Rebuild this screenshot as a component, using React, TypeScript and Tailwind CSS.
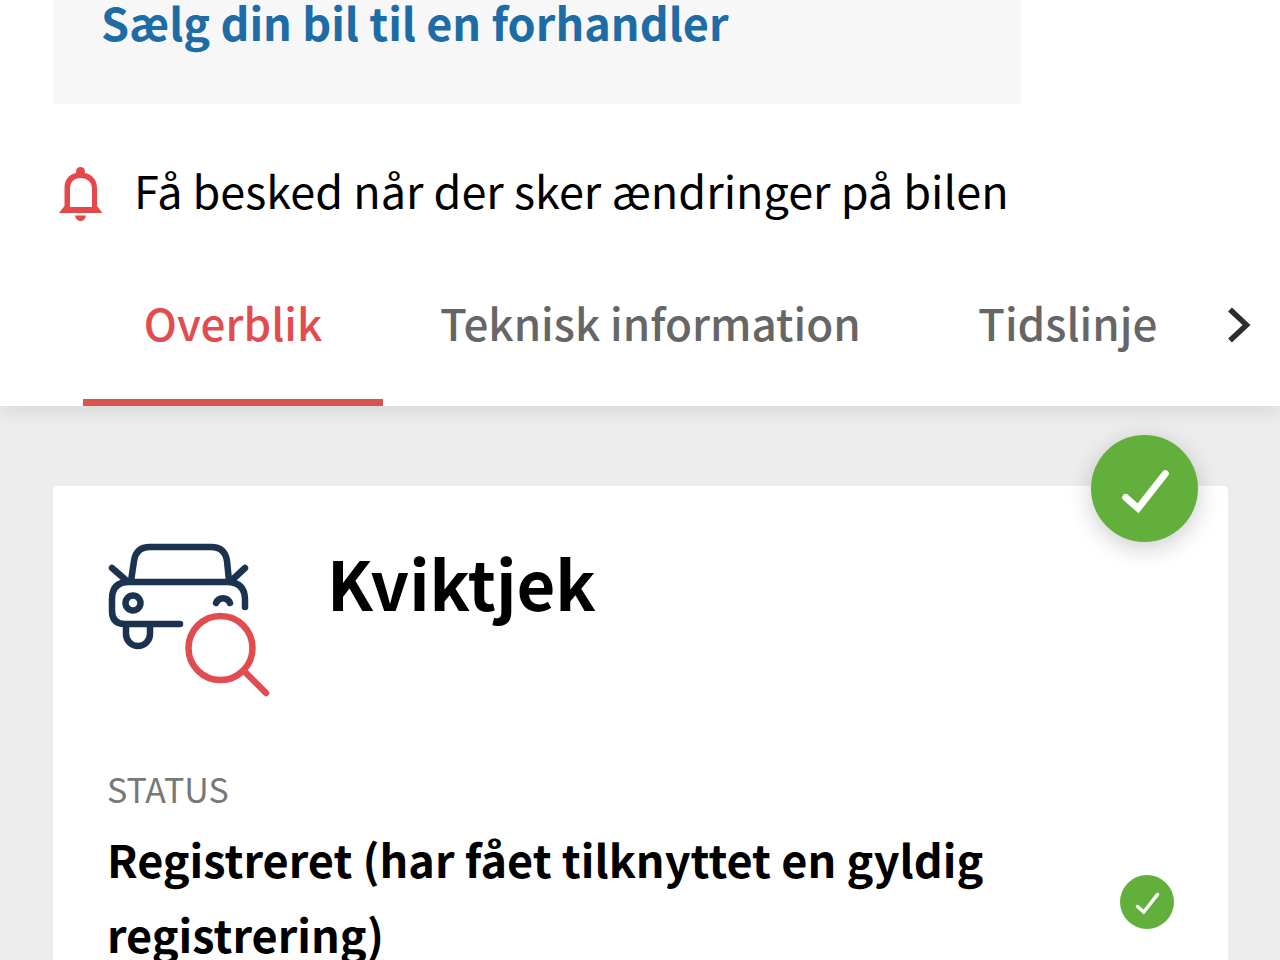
import { useState } from 'react';

const TABS = [
    { id: 'overview', label: 'Overblik' },
    { id: 'technical', label: 'Teknisk information' },
    { id: 'timeline', label: 'Tidslinje' },
];

const BellIcon = () => (
    <svg viewBox="0 0 46 64" className="h-16 w-[46px] shrink-0" aria-hidden="true">
        <path d="M1 55L6.500 48V30C6.500 20 13 14.500 22.500 14.500S39 20 39 30V48L44.500 55Z" fill="#e5484b" />
        <path d="M12 49V31C12 24 16 20 22.500 20S34 24 34 31V49Z" fill="#fff" />
        <circle cx="22.500" cy="13.500" r="4.500" fill="#e5484b" />
        <path d="M17 57.500H28C27.500 61 25.500 63 22.500 63S17.500 61 17 57.500Z" fill="#e5484b" />
    </svg>
);

const CheckIcon = ({ className }: { className: string }) => (
    <svg viewBox="0 0 108 108" className={className} aria-hidden="true">
        <path
            d="M35 63L47.500 74L75 39"
            fill="none"
            stroke="#fff"
            strokeWidth="7"
            strokeLinecap="round"
        />
    </svg>
);

const CarSearchIcon = () => (
    <svg
        viewBox="0 0 164 156"
        className="h-[156px] w-[164px] shrink-0"
        fill="none"
        strokeWidth="6.500"
        strokeLinecap="round"
        strokeLinejoin="round"
        aria-hidden="true"
    >
        <g stroke="#1c3350">
            <path d="M24 39L27 19Q29 5 43 5H104Q118 5 120 19L122 39" />
            <path d="M5 26L20 39M138 26L124 39" />
            <path d="M138 65V58Q138 40 120 40H22Q5 40 5 57V69Q5 82 18 82H73" />
            <path d="M19 83V92A10.500 10.500 0 0 0 43 92V83" />
            <circle cx="26" cy="61" r="7.500" />
            <path d="M109 61A7.500 7.500 0 0 1 123 61" />
        </g>
        <g stroke="#e04c50">
            <circle cx="113.500" cy="106" r="32" />
            <path d="M137 129L159 151" />
        </g>
    </svg>
);

export default function App() {
    const [activeTab, setActiveTab] = useState('overview');

    return (
        <div className="h-screen overflow-hidden bg-[#ededed] font-['Noto_Sans_CJK_SC','Open_Sans',sans-serif] text-black">
            <header className="relative bg-white shadow-[0_4px_20px_rgba(0,0,0,0.1)]">
                {/* Dealer link */}
                <div className="ml-[53px] flex h-[104px] max-w-[968px] bg-[#f7f7f7] px-12">
                    <a href="#dealer" className="text-[45px] leading-[44px] font-bold text-[#1d6ca5]">
                        Sælg din bil til en forhandler
                    </a>
                </div>

                {/* Notifications */}
                <button
                    type="button"
                    className="mt-[54px] ml-[58px] flex h-16 items-center gap-[30px] text-left text-[45px] leading-[64px]"
                >
                    <BellIcon />
                    Få besked når der sker ændringer på bilen
                </button>

                {/* Tabs */}
                <nav className="mt-[22px] flex items-stretch justify-between pr-6 pl-[83px]">
                    <div role="tablist" className="flex">
                        {TABS.map((tab) => (
                            <button
                                key={tab.id}
                                type="button"
                                role="tab"
                                aria-selected={activeTab === tab.id}
                                onClick={() => setActiveTab(tab.id)}
                                className={`h-[162px] min-w-[300px] border-b-[7px] px-[57px] text-[44px] leading-[64px] font-medium whitespace-nowrap ${
                                    activeTab === tab.id
                                        ? 'border-[#d9534f] text-[#e04c50]'
                                        : 'border-transparent text-[#666]'
                                }`}
                            >
                                {tab.label}
                            </button>
                        ))}
                    </div>
                    <button type="button" aria-label="Næste">
                        <svg viewBox="0 0 32 40" className="h-10 w-8" fill="none" aria-hidden="true">
                            <path d="M6 4.500L22.500 20L6 35.500" stroke="#2d2d2d" strokeWidth="5.500" />
                        </svg>
                    </button>
                </nav>
            </header>

            <main className="pt-20 pr-[52px] pl-[53px]">
                <section className="relative rounded-t-sm bg-white px-[54px] pt-14">
                    <span className="absolute -top-[51px] right-[30px] rounded-full bg-[#62b03b] shadow-[0_6px_24px_rgba(0,0,0,0.2)]">
                        <CheckIcon className="size-[107px]" />
                    </span>

                    <div className="flex items-start gap-14">
                        <CarSearchIcon />
                        <h1 className="text-[67px] leading-[80px] font-bold">Kviktjek</h1>
                    </div>

                    {/* Registration status */}
                    <div className="mt-[67px] flex items-center justify-between">
                        <dl>
                            <dt className="mb-2 text-[34px] leading-[48px] text-[#777]">STATUS</dt>
                            <dd className="max-w-[920px] text-[45px] leading-[75px] font-bold">
                                Registreret (har fået tilknyttet en gyldig registrering)
                            </dd>
                        </dl>
                        <span className="mt-[68px] shrink-0 rounded-full bg-[#62b03b]">
                            <CheckIcon className="size-[54px]" />
                        </span>
                    </div>
                </section>
            </main>
        </div>
    );
}
